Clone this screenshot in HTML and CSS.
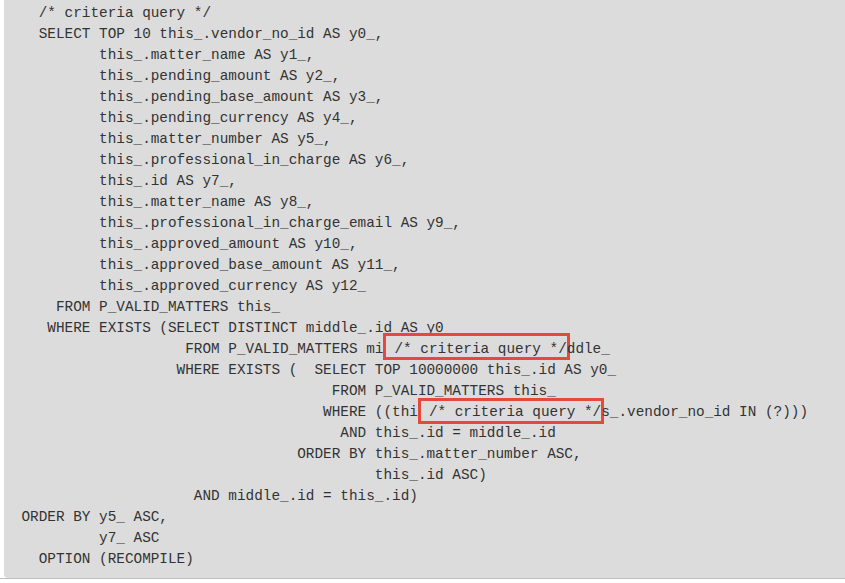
FILE: index.html
```html
<!DOCTYPE html>
<html>
<head>
<meta charset="utf-8">
<link rel="stylesheet" href="styles.css">
</head>
<body>
<div class="frame">
<pre class="code">  /* criteria query */
  SELECT TOP 10 this_.vendor_no_id AS y0_,
         this_.matter_name AS y1_,
         this_.pending_amount AS y2_,
         this_.pending_base_amount AS y3_,
         this_.pending_currency AS y4_,
         this_.matter_number AS y5_,
         this_.professional_in_charge AS y6_,
         this_.id AS y7_,
         this_.matter_name AS y8_,
         this_.professional_in_charge_email AS y9_,
         this_.approved_amount AS y10_,
         this_.approved_base_amount AS y11_,
         this_.approved_currency AS y12_
    FROM P_VALID_MATTERS this_
   WHERE EXISTS (SELECT DISTINCT middle_.id AS y0_
                   FROM P_VALID_MATTERS mi<span class="mark">/* criteria query */</span>ddle_
                  WHERE EXISTS (  SELECT TOP 10000000 this_.id AS y0_
                                    FROM P_VALID_MATTERS this_
                                   WHERE ((thi<span class="mark mark-low">/* criteria query */</span>s_.vendor_no_id IN (?)))
                                     AND this_.id = middle_.id
                                ORDER BY this_.matter_number ASC,
                                         this_.id ASC)
                    AND middle_.id = this_.id)
ORDER BY y5_ ASC,
         y7_ ASC
  OPTION (RECOMPILE)</pre>
</div>
</body>
</html>
```

FILE: styles.css
```css
html, body {
  margin: 0;
  padding: 0;
  background: #ffffff;
}

.frame {
  padding-left: 4px;
  border-bottom: 1px solid #bdbdbd;
  height: 579px;
  box-sizing: border-box;
  overflow: hidden;
}

.code {
  margin: 0;
  height: 578px;
  box-sizing: border-box;
  background: #dcdcdc;
  border-radius: 0 0 0 4px;
  padding: 3px 0 0 17.5px;
  font-family: "Liberation Mono", monospace;
  font-size: 14.37px;
  line-height: 21px;
  color: #333333;
  white-space: pre;
}

.mark {
  border: 3px solid #e5483d;
  padding: 5px 0 0 8px;
  margin-right: -3px;
}

.mark-low {
  padding-top: 3px;
  padding-bottom: 1px;
}
```
